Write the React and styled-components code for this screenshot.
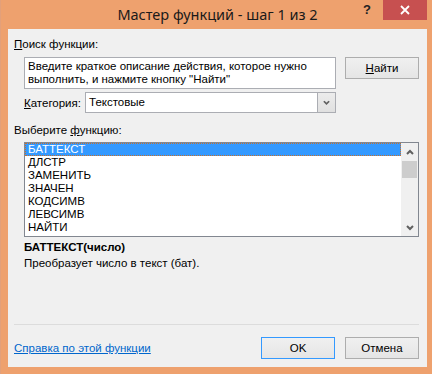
import React from "react";
import styled, { createGlobalStyle } from "styled-components";

const GlobalStyle = createGlobalStyle`
  html, body {
    margin: 0;
    padding: 0;
    background: #eea16e;
  }
  body {
    font-family: "Liberation Sans", Arial, sans-serif;
    font-size: 11.5px;
    color: #000;
  }
`;

const Window = styled.div`
  width: 432px;
  height: 374px;
  background: #eea16e;
  display: flex;
  flex-direction: column;
  box-sizing: border-box;
  border-left: 1px solid #e3a07a;
`;

const TitleBar = styled.div`
  height: 29px;
  display: grid;
  grid-template-columns: 1fr auto 1fr;
  align-items: start;
`;

const Title = styled.div`
  grid-column: 2;
  font-family: "Noto Sans", "Liberation Sans", sans-serif;
  font-size: 14.5px;
  line-height: 28px;
  color: #1a1a1a;
  padding-left: 2px;
`;

const Controls = styled.div`
  grid-column: 3;
  justify-self: end;
  display: flex;
  align-items: flex-start;
  margin-right: 5px;
`;

const HelpGlyph = styled.div`
  font-family: "Liberation Sans", sans-serif;
  font-weight: bold;
  font-size: 13px;
  line-height: 20px;
  color: #222;
  margin-right: 12px;
`;

const CloseButton = styled.div`
  width: 44px;
  height: 20px;
  background: #c75050;
  display: flex;
  align-items: center;
  justify-content: center;
`;

const Panel = styled.div`
  flex: 1;
  margin: 0 5px 7px 7px;
  background: #f0f0f0;
  padding: 8px 8px 0 6px;
  display: flex;
  flex-direction: column;
`;

const Label = styled.div`
  line-height: 14px;
  margin-top: ${(p) => p.$top || 0}px;
  margin-left: ${(p) => p.$indent || 0}px;
  font-weight: ${(p) => (p.$bold ? "bold" : "normal")};
`;

const Key = styled.span`
  text-decoration: underline;
`;

const Row = styled.div`
  display: flex;
  align-items: ${(p) => p.$align || "flex-start"};
  margin-top: ${(p) => p.$top || 0}px;
  margin-left: ${(p) => p.$indent || 0}px;
  gap: ${(p) => p.$gap || 0}px;
`;

const SearchBox = styled.div`
  width: 312px;
  height: 32px;
  box-sizing: border-box;
  background: #fff;
  border: 1px solid #abadb3;
  padding: 2px 3px;
  line-height: 13px;
`;

const Button = styled.div`
  width: 74px;
  height: 22px;
  box-sizing: border-box;
  border: 1px solid ${(p) => (p.$default ? "#3399ff" : "#adadad")};
  background: linear-gradient(#f0f0f0, #e5e5e5);
  display: flex;
  align-items: center;
  justify-content: center;
  line-height: 14px;
`;

const CategoryLabel = styled.div`
  width: 61px;
  line-height: 14px;
`;

const Combo = styled.div`
  width: 251px;
  height: 21px;
  box-sizing: border-box;
  border: 1px solid #abadb3;
  background: #fff;
  display: flex;
`;

const ComboText = styled.div`
  flex: 1;
  padding-left: 3px;
  line-height: 19px;
`;

const ComboArrow = styled.div`
  width: 17px;
  background: linear-gradient(#ececec, #e0e0e0);
  border-left: 1px solid #abadb3;
  display: flex;
  align-items: center;
  justify-content: center;
`;

const ListBox = styled.div`
  width: 395px;
  height: 95px;
  box-sizing: border-box;
  border: 1px solid #828790;
  background: #fff;
  display: flex;
`;

const Items = styled.div`
  flex: 1;
  display: flex;
  flex-direction: column;
`;

const Item = styled.div`
  height: 13px;
  line-height: 13px;
  padding-left: 2px;
  box-sizing: border-box;
  background: ${(p) => (p.$selected ? "#3399ff" : "transparent")};
  color: ${(p) => (p.$selected ? "#fff" : "#000")};
  border: 1px dotted ${(p) => (p.$selected ? "#c8702a" : "transparent")};
  display: flex;
  align-items: center;
`;

const ScrollBar = styled.div`
  width: 17px;
  background: #f0f0f0;
  display: flex;
  flex-direction: column;
`;

const ScrollArrow = styled.div`
  height: 17px;
  display: flex;
  align-items: center;
  justify-content: center;
`;

const Thumb = styled.div`
  height: 17px;
  margin: 1px 1px 0 1px;
  background: #cdcdcd;
`;

const Track = styled.div`
  flex: 1;
`;

const Separator = styled.div`
  height: 1px;
  width: 405px;
  background: #dcdcdc;
  margin-top: ${(p) => p.$top || 0}px;
`;

const Footer = styled.div`
  display: flex;
  align-items: center;
  margin-top: 12px;
  width: 405px;
`;

const HelpLink = styled.a`
  color: #0066cc;
  text-decoration: underline;
  line-height: 14px;
  flex: 1;
`;

const ButtonGroup = styled.div`
  display: flex;
  gap: 10px;
`;

const Chevron = ({ up, w = 8, color = "#606060" }) => (
  <svg width={w} height="6" viewBox="0 0 8 6">
    <polyline
      points={up ? "1,5 4,2 7,5" : "1,1 4,4 7,1"}
      fill="none"
      stroke={color}
      strokeWidth="2"
    />
  </svg>
);

const functions = [
  "БАТТЕКСТ",
  "ДЛСТР",
  "ЗАМЕНИТЬ",
  "ЗНАЧЕН",
  "КОДСИМВ",
  "ЛЕВСИМВ",
  "НАЙТИ",
];

export default function App() {
  return (
    <>
      <GlobalStyle />
      <Window>
        <TitleBar>
          <Title>Мастер функций - шаг 1 из 2</Title>
          <Controls>
            <HelpGlyph>?</HelpGlyph>
            <CloseButton>
              <svg width="10" height="10" viewBox="0 0 10 10">
                <path d="M1 1 L9 9 M9 1 L1 9" stroke="#fff" strokeWidth="1.8" />
              </svg>
            </CloseButton>
          </Controls>
        </TitleBar>
        <Panel>
          <Label>
            <Key>П</Key>оиск функции:
          </Label>
          <Row $top={6} $indent={10} $gap={9}>
            <SearchBox>
              Введите краткое описание действия, которое нужно
              <br />
              выполнить, и нажмите кнопку "Найти"
            </SearchBox>
            <Button>
              <span>
                <Key>Н</Key>айти
              </span>
            </Button>
          </Row>
          <Row $top={3} $indent={10} $align="center">
            <CategoryLabel>
              <Key>К</Key>атегория:
            </CategoryLabel>
            <Combo>
              <ComboText>Текстовые</ComboText>
              <ComboArrow>
                <Chevron w={7} />
              </ComboArrow>
            </Combo>
          </Row>
          <Label $top={10}>
            Выберите <Key>ф</Key>ункцию:
          </Label>
          <Row $top={5} $indent={10}>
            <ListBox>
              <Items>
                {functions.map((name, i) => (
                  <Item key={name} $selected={i === 0}>
                    {name}
                  </Item>
                ))}
              </Items>
              <ScrollBar>
                <ScrollArrow>
                  <Chevron up />
                </ScrollArrow>
                <Thumb />
                <Track />
                <ScrollArrow>
                  <Chevron />
                </ScrollArrow>
              </ScrollBar>
            </ListBox>
          </Row>
          <Label $top={3} $indent={10} $bold>
            БАТТЕКСТ(число)
          </Label>
          <Label $top={2} $indent={10}>
            Преобразует число в текст (бат).
          </Label>
          <Separator $top={54} />
          <Footer>
            <HelpLink href="#">Справка по этой функции</HelpLink>
            <ButtonGroup>
              <Button $default>OK</Button>
              <Button>Отмена</Button>
            </ButtonGroup>
          </Footer>
        </Panel>
      </Window>
    </>
  );
}
